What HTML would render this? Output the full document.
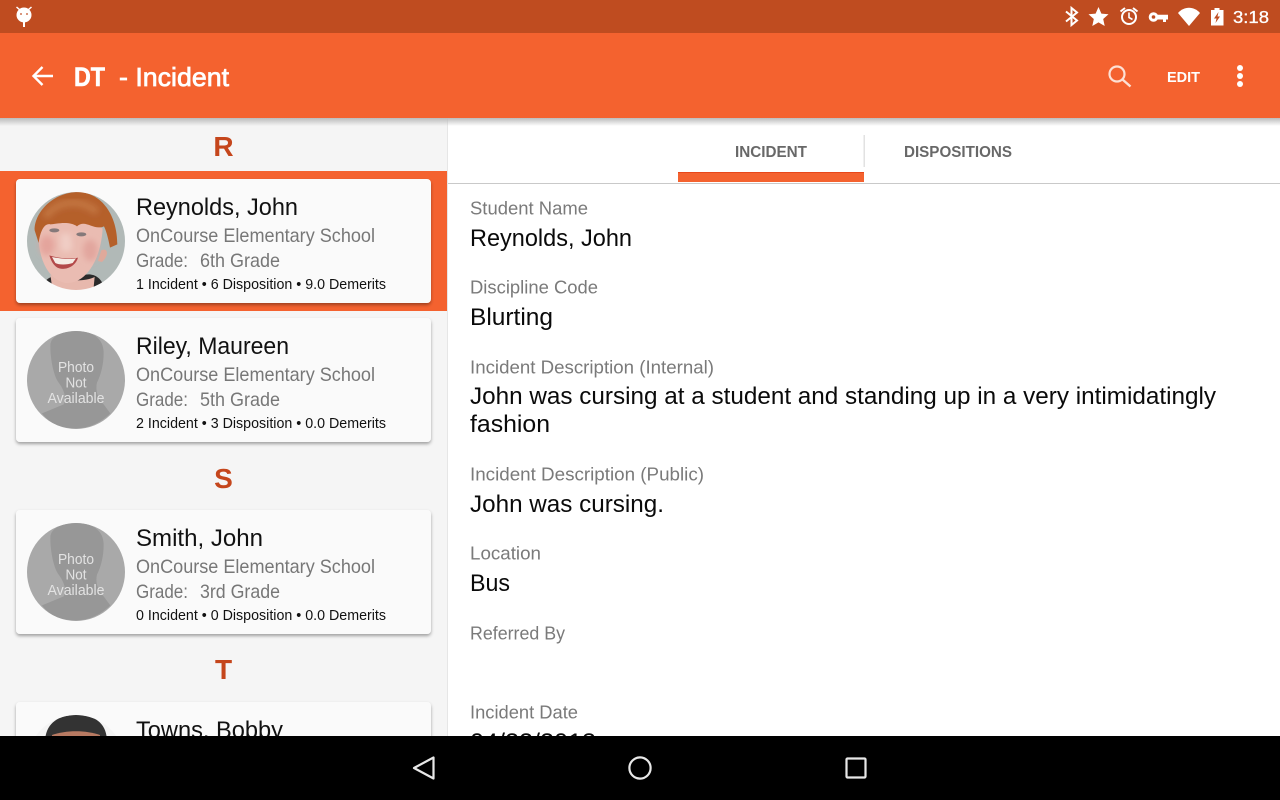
<!DOCTYPE html>
<html><head><meta charset="utf-8"><style>
html,body{margin:0;padding:0;width:1280px;height:800px;overflow:hidden;background:#fff}
svg{display:block}
text{font-family:"Liberation Sans",sans-serif}
.n{font-size:24px;fill:#111}
.s{font-size:19.5px;fill:#777}
.m{font-size:14.5px;fill:#111}
.l{font-size:18.5px;fill:#7a7a7a}
.v{font-size:24px;fill:#0a0a0a}
.h{font-size:28px;font-weight:bold;fill:#c5461c}
.p{font-size:14.5px;fill:#e2e2e2}
</style></head><body>
<svg width="1280" height="800" viewBox="0 0 1280 800" xmlns="http://www.w3.org/2000/svg">
<defs>
<linearGradient id="sh" x1="0" y1="0" x2="0" y2="1"><stop offset="0" stop-color="#bbb"/><stop offset="1" stop-color="#bbb" stop-opacity="0"/></linearGradient>
<filter id="cs" x="-5%" y="-10%" width="110%" height="125%"><feDropShadow dx="0" dy="2" stdDeviation="1.6" flood-color="#000" flood-opacity=".35"/></filter>
<filter id="b1"><feGaussianBlur stdDeviation=".7"/></filter>
<filter id="b2"><feGaussianBlur stdDeviation="1"/></filter>
<filter id="b3" x="-30%" y="-30%" width="160%" height="160%"><feGaussianBlur stdDeviation="9"/></filter>
<filter id="b4" x="-20%" y="-20%" width="140%" height="140%"><feGaussianBlur stdDeviation="4"/></filter>
<clipPath id="c1"><circle cx="76" cy="241" r="49"/></clipPath>
<clipPath id="c4"><circle cx="76" cy="764" r="49"/></clipPath>
<clipPath id="c0"><circle cx="0" cy="0" r="49"/></clipPath>
<clipPath id="content"><rect x="0" y="0" width="1280" height="736"/></clipPath>
<g id="nophoto">
<circle cx="0" cy="0" r="49" fill="#a9a9a9"/>
<g clip-path="url(#c0)">
<path transform="translate(-54,-54) scale(.3333)" d="M85 60C85 25 130 15 165 15C215 15 245 40 245 80C245 120 235 150 225 170C220 190 225 215 245 235L265 262C230 295 195 307 160 307C120 307 85 295 60 262L125 235C135 215 125 190 110 170C95 150 85 100 85 60Z" fill="#979797" filter="url(#b1)"/>
</g>
<text x="0" y="-8" text-anchor="middle" class="p" textLength="36" lengthAdjust="spacingAndGlyphs">Photo</text>
<text x="0" y="7.500" text-anchor="middle" class="p" textLength="21" lengthAdjust="spacingAndGlyphs">Not</text>
<text x="0" y="23" text-anchor="middle" class="p" textLength="57" lengthAdjust="spacingAndGlyphs">Available</text>
</g>
</defs>

<rect width="1280" height="800" fill="#fff"/>
<rect x="0" y="118" width="447" height="620" fill="#f5f5f5"/>
<rect x="447" y="118" width="1" height="620" fill="#e6e6e6"/>

<g clip-path="url(#content)">
<!-- list -->
<text x="223.500" y="156" text-anchor="middle" class="h">R</text>
<rect x="0" y="171" width="447" height="140" fill="#f4622f"/>
<rect x="16" y="179" width="415" height="124" rx="4" fill="#fafafa" filter="url(#cs)"/>
<g clip-path="url(#c1)">
<g transform="translate(22,187) scale(.3333)" filter="url(#b2)">
<rect x="0" y="0" width="324" height="324" fill="#b1b9b7"/>
<path d="M60 300C70 270 100 262 120 268L200 262C220 262 240 275 245 300V320H60Z" fill="#2b2b2b"/>
<path d="M85 262C110 285 190 285 218 270L215 300C190 315 120 315 90 298Z" fill="#e7b8ad"/>
<path d="M238 190C258 180 262 205 240 225L228 222Z" fill="#dfa99b"/>
<path d="M50 130C46 200 70 275 130 288C190 292 236 222 242 125C200 95 100 95 60 115Z" fill="#eabcb2"/>
<ellipse cx="75" cy="175" rx="22" ry="30" fill="#e4a49c" filter="url(#b3)"/>
<ellipse cx="205" cy="190" rx="22" ry="32" fill="#e2a69e" filter="url(#b3)"/>
<path d="M115 140C118 165 110 190 125 193C140 196 155 192 150 170C148 155 146 145 146 140Z" fill="#f0cdc5" filter="url(#b3)"/>
<path d="M38 130C36 80 90 15 170 15C240 18 286 85 286 172L264 182C258 150 252 130 246 118C215 132 190 95 165 118C140 100 100 112 85 112C68 108 55 130 50 168Z" fill="#b5602c"/>
<path d="M70 90C100 45 170 30 225 75" stroke="#c27540" stroke-width="22" fill="none" filter="url(#b3)"/>
<ellipse cx="97" cy="130" rx="15" ry="6" fill="#85797a"/>
<ellipse cx="178" cy="142" rx="15" ry="6" fill="#85797a"/>
<path d="M82 205C105 212 145 218 168 212C160 240 130 250 112 244C98 240 88 225 82 205Z" fill="#b34a4a"/>
<path d="M90 210C110 214 145 219 162 214L152 228C135 234 110 234 100 228Z" fill="#f5ebe4"/>
</g>
</g>
<text x="136" y="215" class="n" textLength="162" lengthAdjust="spacingAndGlyphs">Reynolds, John</text>
<text x="136" y="242" class="s" textLength="239" lengthAdjust="spacingAndGlyphs">OnCourse Elementary School</text>
<text x="136" y="267" class="s" textLength="52" lengthAdjust="spacingAndGlyphs">Grade:</text>
<text x="200" y="267" class="s" textLength="80" lengthAdjust="spacingAndGlyphs">6th Grade</text>
<text x="136" y="289" class="m" textLength="250" lengthAdjust="spacingAndGlyphs">1 Incident • 6 Disposition • 9.0 Demerits</text>

<rect x="16" y="318" width="415" height="124" rx="4" fill="#fafafa" filter="url(#cs)"/>
<use href="#nophoto" x="76" y="380"/>
<text x="136" y="354" class="n" textLength="153" lengthAdjust="spacingAndGlyphs">Riley, Maureen</text>
<text x="136" y="381" class="s" textLength="239" lengthAdjust="spacingAndGlyphs">OnCourse Elementary School</text>
<text x="136" y="406" class="s" textLength="52" lengthAdjust="spacingAndGlyphs">Grade:</text>
<text x="200" y="406" class="s" textLength="80" lengthAdjust="spacingAndGlyphs">5th Grade</text>
<text x="136" y="428" class="m" textLength="250" lengthAdjust="spacingAndGlyphs">2 Incident • 3 Disposition • 0.0 Demerits</text>

<text x="223.500" y="488" text-anchor="middle" class="h">S</text>
<rect x="16" y="510" width="415" height="124" rx="4" fill="#fafafa" filter="url(#cs)"/>
<use href="#nophoto" x="76" y="572"/>
<text x="136" y="546" class="n" textLength="127" lengthAdjust="spacingAndGlyphs">Smith, John</text>
<text x="136" y="573" class="s" textLength="239" lengthAdjust="spacingAndGlyphs">OnCourse Elementary School</text>
<text x="136" y="598" class="s" textLength="52" lengthAdjust="spacingAndGlyphs">Grade:</text>
<text x="200" y="598" class="s" textLength="80" lengthAdjust="spacingAndGlyphs">3rd Grade</text>
<text x="136" y="620" class="m" textLength="250" lengthAdjust="spacingAndGlyphs">0 Incident • 0 Disposition • 0.0 Demerits</text>

<text x="223.500" y="679" text-anchor="middle" class="h">T</text>
<rect x="16" y="702" width="415" height="124" rx="4" fill="#fafafa" filter="url(#cs)"/>
<g clip-path="url(#c4)">
<rect x="27" y="715" width="98" height="40" fill="#f4f4f4"/>
<path d="M45 745C44 722 60 715 76 715C94 715 108 722 107 745Z" fill="#333"/>
<path d="M52 735C66 730 86 730 100 735V745H52Z" fill="#b87a62"/>
</g>
<text x="136" y="738" class="n" textLength="147" lengthAdjust="spacingAndGlyphs">Towns, Bobby</text>

<!-- tabs -->
<text x="735" y="157" font-size="15.5" font-weight="bold" fill="#686868" textLength="72" lengthAdjust="spacingAndGlyphs">INCIDENT</text>
<text x="904" y="157" font-size="15.5" font-weight="bold" fill="#686868" textLength="108" lengthAdjust="spacingAndGlyphs">DISPOSITIONS</text>
<rect x="863.500" y="135" width="1.500" height="32" fill="#e2e2e2"/>
<rect x="678" y="172" width="186" height="10" fill="#f4622f"/>
<rect x="678" y="172" width="186" height="1" fill="#e8471a"/>
<rect x="448" y="183" width="832" height="1" fill="#c9c9c9"/>

<!-- detail -->
<text x="470" y="214.500" class="l" textLength="118" lengthAdjust="spacingAndGlyphs">Student Name</text>
<text x="470" y="246" class="v" textLength="162" lengthAdjust="spacingAndGlyphs">Reynolds, John</text>
<text x="470" y="293.500" class="l" textLength="128" lengthAdjust="spacingAndGlyphs">Discipline Code</text>
<text x="470" y="325" class="v" textLength="83" lengthAdjust="spacingAndGlyphs">Blurting</text>
<text x="470" y="373.500" class="l" textLength="244" lengthAdjust="spacingAndGlyphs">Incident Description (Internal)</text>
<text x="470" y="404" class="v" textLength="746" lengthAdjust="spacingAndGlyphs">John was cursing at a student and standing up in a very intimidatingly</text>
<text x="470" y="432" class="v" textLength="80" lengthAdjust="spacingAndGlyphs">fashion</text>
<text x="470" y="480.500" class="l" textLength="234" lengthAdjust="spacingAndGlyphs">Incident Description (Public)</text>
<text x="470" y="512" class="v" textLength="194" lengthAdjust="spacingAndGlyphs">John was cursing.</text>
<text x="470" y="559.500" class="l" textLength="71" lengthAdjust="spacingAndGlyphs">Location</text>
<text x="470" y="591" class="v" textLength="40" lengthAdjust="spacingAndGlyphs">Bus</text>
<text x="470" y="639.500" class="l" textLength="95" lengthAdjust="spacingAndGlyphs">Referred By</text>
<text x="470" y="718.500" class="l" textLength="108" lengthAdjust="spacingAndGlyphs">Incident Date</text>
<text x="470" y="750" class="v" textLength="126" lengthAdjust="spacingAndGlyphs">04/22/2013</text>
</g>

<!-- bars -->
<rect x="0" y="118" width="1280" height="8" fill="url(#sh)"/>
<rect x="0" y="33" width="1280" height="85" fill="#f4622f"/>
<rect x="0" y="0" width="1280" height="33" fill="#bf4c20"/>

<!-- notification icon -->
<g fill="#fff">
<circle cx="24" cy="15" r="7.500"/>
<rect x="23" y="20" width="2" height="7"/>
<path d="M17 6.500l3.500 3-1 1-3.500-3zM31 6.500l-3.500 3 1 1 3.500-3z"/>
</g>
<circle cx="21" cy="14" r=".9" fill="#bf4c20"/><circle cx="27" cy="14" r=".9" fill="#bf4c20"/>

<!-- status icons -->
<path d="M1066 11.500L1077 20.500L1071.500 25V8L1077 12.500L1066 21.500" fill="none" stroke="#fff" stroke-width="2"/>
<path d="M1098.500 7L1101.400 13.600L1108.500 14.300L1103.200 19L1104.700 26L1098.500 22.400L1092.300 26L1093.800 19L1088.500 14.300L1095.600 13.600Z" fill="#fff"/>
<circle cx="1129" cy="17" r="7" fill="none" stroke="#fff" stroke-width="2"/>
<path d="M1129 12.500V17.500L1132.500 19.500" fill="none" stroke="#fff" stroke-width="1.600"/>
<path d="M1120.500 11.500L1125 8M1137.500 11.500L1133 8" stroke="#fff" stroke-width="2" fill="none"/>
<circle cx="1153.500" cy="17" r="3.300" fill="none" stroke="#fff" stroke-width="3"/>
<path d="M1157 14.700H1168V19.500H1166V22H1163V19.500H1157Z" fill="#fff"/>
<path d="M1178 13C1184 6 1194 6 1200 13L1189 26Z" fill="#fff"/>
<path fill-rule="evenodd" d="M1214.500 8H1219.500V10H1223.500V25.500H1211V10H1214.500ZM1218.500 12L1214 18.500H1216.500L1215.500 23L1220 16.500H1217.500Z" fill="#fff"/>
<text x="1233" y="23" font-size="17.500" fill="#fff" stroke="#fff" stroke-width=".3" textLength="36" lengthAdjust="spacingAndGlyphs">3:18</text>

<!-- app bar -->
<path d="M53 76H34M42.500 67L33.500 76L42.500 85" fill="none" stroke="#fff" stroke-width="2.400"/>
<text x="74" y="86" font-size="26.500" font-weight="bold" fill="#fff" stroke="#fff" stroke-width=".6" textLength="31" lengthAdjust="spacingAndGlyphs">DT</text>
<text x="119" y="86" font-size="26" fill="#fff" stroke="#fff" stroke-width=".7" textLength="110" lengthAdjust="spacingAndGlyphs">- Incident</text>
<circle cx="1117" cy="74" r="7.500" fill="none" stroke="#fde0d4" stroke-width="2.200"/>
<path d="M1122.500 79.500L1130.500 86.500" stroke="#fde0d4" stroke-width="2.400"/>
<text x="1167" y="82" font-size="15" font-weight="bold" fill="#fff" textLength="33" lengthAdjust="spacingAndGlyphs">EDIT</text>
<circle cx="1240" cy="68" r="3" fill="#fff"/><circle cx="1240" cy="76" r="3" fill="#fff"/><circle cx="1240" cy="84" r="3" fill="#fff"/>

<!-- nav -->
<rect x="0" y="736" width="1280" height="64" fill="#000"/>
<path d="M433.500 757.500V778.500L414 768Z" fill="none" stroke="#e8e8e8" stroke-width="2.200" stroke-linejoin="round"/>
<circle cx="640" cy="768" r="10.600" fill="none" stroke="#e8e8e8" stroke-width="2.200"/>
<rect x="846.500" y="758.500" width="19" height="19" rx="1" fill="none" stroke="#e8e8e8" stroke-width="2.200"/>
</svg>
</body></html>
